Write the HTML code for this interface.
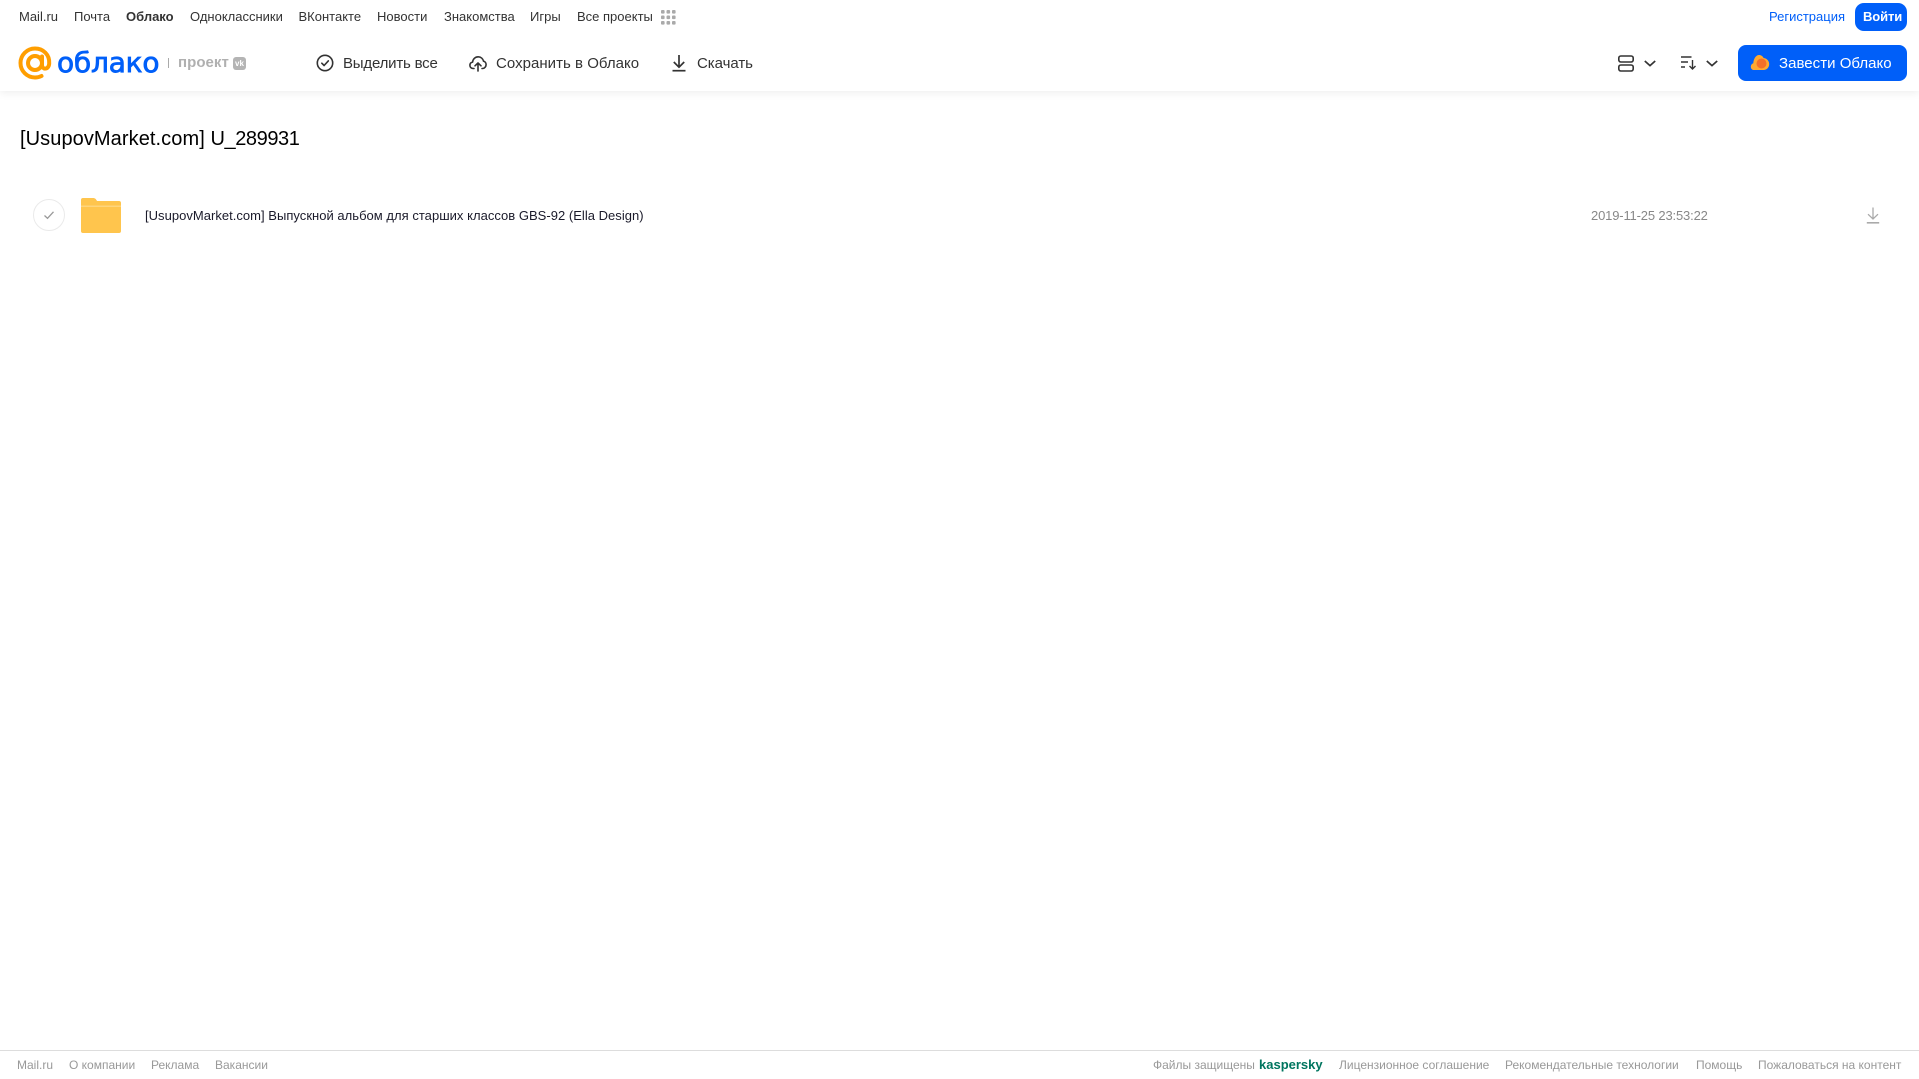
<!DOCTYPE html>
<html lang="ru">
<head>
<meta charset="utf-8">
<title>Облако</title>
<style>
html,body{margin:0;padding:0;background:#fff;width:1919px;height:1079px;overflow:hidden}
body{position:relative;font-family:"Liberation Sans",Arial,sans-serif}
.t{position:absolute;white-space:nowrap;line-height:20px}
.n{font-size:13px;color:#333;top:6.5px}
.a{font-size:15px;color:#333;top:53.5px}
.f{font-size:12px;color:#999;top:1055px}
svg{position:absolute;display:block}
</style>
</head>
<body>
<div style="position:absolute;left:0;top:0;width:1919px;height:91px;background:#fff;box-shadow:0 2px 8px rgba(0,0,0,.07)"></div>

<span class="t n" style="left:19px">Mail.ru</span>
<span class="t n" style="left:74px">Почта</span>
<span class="t n" style="left:126px;font-weight:bold">Облако</span>
<span class="t n" style="left:190px">Одноклассники</span>
<span class="t n" style="left:298.500px">ВКонтакте</span>
<span class="t n" style="left:377px">Новости</span>
<span class="t n" style="left:444px">Знакомства</span>
<span class="t n" style="left:530px">Игры</span>
<span class="t n" style="left:577px">Все проекты</span>
<svg style="left:661px;top:10px" width="15" height="15" fill="#aaa"><rect x="0" y="0" width="3.6" height="3.6" rx="1"/><rect x="5.5" y="0" width="3.6" height="3.6" rx="1"/><rect x="11" y="0" width="3.6" height="3.6" rx="1"/><rect x="0" y="5.5" width="3.6" height="3.6" rx="1"/><rect x="5.5" y="5.5" width="3.6" height="3.6" rx="1"/><rect x="11" y="5.5" width="3.6" height="3.6" rx="1"/><rect x="0" y="11" width="3.6" height="3.6" rx="1"/><rect x="5.5" y="11" width="3.6" height="3.6" rx="1"/><rect x="11" y="11" width="3.6" height="3.6" rx="1"/></svg>

<span class="t n" style="left:1769px;color:#005ff9">Регистрация</span>
<div style="position:absolute;left:1855px;top:3px;width:52px;height:28px;border-radius:9px;background:#005ff9"></div>
<span class="t n" style="left:1863px;color:#fff;font-weight:bold;letter-spacing:-.1px">Войти</span>

<svg style="left:18px;top:46px" width="34" height="34" viewBox="0 0 34 34" fill="none" stroke="#ff9e00" stroke-width="4"><circle cx="17" cy="17" r="7"/><path d="M24 10.500v8.500c0 5 6.800 5 7.200-1.500C31.800 8.500 25 2.500 17 2.500 9 2.500 2.500 9 2.500 17S9 31.500 17 31.500c2.500 0 4.500-.5 6.500-1.500" stroke-linecap="round"/></svg>
<span class="t" style="left:57px;top:46px;line-height:34px;font-family:'DejaVu Sans',sans-serif;font-size:28px;color:#005ff9;-webkit-text-stroke:.8px #005ff9;letter-spacing:-.2px">облако</span>
<div style="position:absolute;left:168px;top:58px;width:1px;height:10px;background:#aaa"></div>
<span class="t" style="left:178px;top:53px;font-size:15px;font-weight:bold;color:#b0b0b0;letter-spacing:.05px">проект</span>
<div style="position:absolute;left:233px;top:57px;width:13px;height:13px;border-radius:3px;background:#b4b4b4;color:#fff;font-size:8px;font-weight:bold;line-height:13px;text-align:center">vk</div>

<svg style="left:316px;top:54px" width="18" height="18" viewBox="0 0 18 18" fill="none" stroke="#333" stroke-width="1.600"><circle cx="9" cy="9" r="7.700"/><path d="M5.800 9.200l2.300 2.300 4.200-4.600" stroke-linecap="round" stroke-linejoin="round"/></svg>
<span class="t a" style="left:343px;letter-spacing:-.2px">Выделить все</span>

<svg style="left:469px;top:54px" width="18" height="18" viewBox="0 0 18 18" fill="none" stroke="#333" stroke-width="1.600" stroke-linecap="round" stroke-linejoin="round"><path d="M5 14.500H4.200C2.200 14.500.9 13 .9 11.300c0-1.600 1.100-2.900 2.700-3.200C3.900 5.100 6.200 2.800 9.200 2.800c2.700 0 4.800 1.900 5.300 4.400 1.500.3 2.600 1.700 2.600 3.300 0 2-1.400 4-3.600 4H13"/><path d="M9 17V9M6 11.800L9 9l3 2.800"/></svg>
<span class="t a" style="left:496px;letter-spacing:.03px">Сохранить в Облако</span>

<svg style="left:671px;top:54px" width="16" height="18" viewBox="0 0 16 18" fill="none" stroke="#333" stroke-width="1.700"><path d="M8 1v12M2.800 8L8 13.200 13.200 8"/><path d="M1.500 16.700h13"/></svg>
<span class="t a" style="left:697px;letter-spacing:-.05px">Скачать</span>

<svg style="left:1618px;top:55px" width="16" height="17" viewBox="0 0 16 17" fill="none" stroke="#333" stroke-width="1.600"><rect x=".8" y="1" width="14.400" height="6" rx="2"/><rect x=".8" y="10" width="14.400" height="6" rx="2"/></svg>
<svg style="left:1644px;top:60px" width="12" height="7" viewBox="0 0 12 7" fill="none" stroke="#333" stroke-width="1.700"><path d="M.8 1l5.200 4.600L11.200 1"/></svg>
<svg style="left:1681px;top:56px" width="16" height="14" viewBox="0 0 16 14" fill="none" stroke="#333" stroke-width="1.400"><path d="M0 1h10.500M0 6h7M0 11h4"/><path d="M11.500 4v9M8.500 10l3 3 3-3"/></svg>
<svg style="left:1706px;top:60px" width="12" height="7" viewBox="0 0 12 7" fill="none" stroke="#333" stroke-width="1.700"><path d="M.8 1l5.200 4.600L11.200 1"/></svg>

<div style="position:absolute;left:1738px;top:45px;width:169px;height:36px;border-radius:8px;background:#005ff9"></div>
<svg style="left:1750px;top:54px" width="20" height="17" viewBox="0 0 20 17"><path d="M4 16C1.800 16 .8 14.300.8 12.600c0-1.700 1-3 2.500-3.400C3.600 5 5.800 1 9 1c2.200 0 3.800 1.300 4.600 3 3.200.2 5.600 3 5.600 6 0 3.300-2.300 6-5.600 6z" fill="#ffa930"/><circle cx="11.500" cy="9.500" r="5" fill="#f4702a"/></svg>
<span class="t" style="left:1779px;top:53.500px;font-size:15px;color:#fff;letter-spacing:.03px">Завести Облако</span>

<span class="t" style="left:20px;top:126px;line-height:26px;font-size:20px;color:#000;letter-spacing:.08px">[UsupovMarket.com]</span>
<span class="t" style="left:210.500px;top:126px;line-height:26px;font-size:20px;color:#000;letter-spacing:-.42px">U_289931</span>

<div style="position:absolute;left:33px;top:199px;width:30px;height:30px;border:1px solid #eaeaea;border-radius:50%"></div>
<svg style="left:43px;top:210px" width="12" height="10" viewBox="0 0 12 10" fill="none" stroke="#999" stroke-width="1.300"><path d="M1.500 5.500l3 2.800 6-6.500"/></svg>
<svg style="left:81px;top:198px" width="40" height="35" viewBox="0 0 40 35"><path d="M2 0h10c2 0 3 1 4 3h22a2 2 0 0 1 2 2v28a2 2 0 0 1-2 2H2a2 2 0 0 1-2-2V2a2 2 0 0 1 2-2z" fill="#ffc54d"/><path d="M0 9h40v-1.500H0z" fill="#ffd57a"/></svg>
<span class="t" style="left:145px;top:206px;font-size:13px;color:#1a1a2a;letter-spacing:.025px">[UsupovMarket.com] Выпускной альбом для старших классов GBS-92 (Ella Design)</span>
<span class="t" style="left:1591px;top:206px;font-size:13px;color:#888;letter-spacing:-.16px">2019-11-25 23:53:22</span>
<svg style="left:1866px;top:207px" width="14" height="17" viewBox="0 0 14 17" fill="none" stroke="#aaa" stroke-width="1.300"><path d="M7 .5v11.500M2 7.200L7 12l5-4.800"/><path d="M.8 15.800h12.400" stroke-width="1.600"/></svg>

<div style="position:absolute;left:0;top:1050px;width:1919px;height:1px;background:#ddd"></div>
<span class="t f" style="left:17px">Mail.ru</span>
<span class="t f" style="left:69px">О компании</span>
<span class="t f" style="left:151px">Реклама</span>
<span class="t f" style="left:215px">Вакансии</span>
<span class="t f" style="left:1153px">Файлы защищены</span>
<span class="t f" style="left:1259px;font-weight:bold;font-size:13px;color:#00755f">kaspersky</span>
<span class="t f" style="left:1339px">Лицензионное соглашение</span>
<span class="t f" style="left:1505px">Рекомендательные технологии</span>
<span class="t f" style="left:1696px">Помощь</span>
<span class="t f" style="left:1758px">Пожаловаться на контент</span>
</body>
</html>
